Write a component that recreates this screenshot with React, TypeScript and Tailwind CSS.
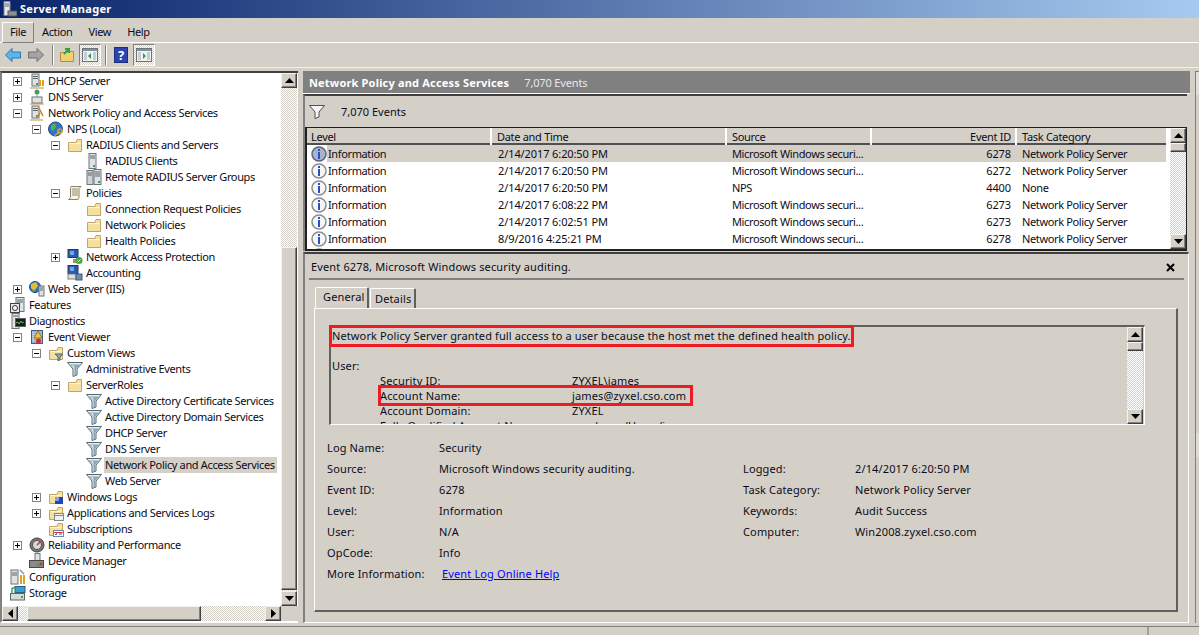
import React from 'react';

type IconKind =
    | 'dhcp' | 'dns' | 'npas' | 'globe' | 'folder' | 'client' | 'clients' | 'scroll' | 'nap' | 'acct'
    | 'web' | 'features' | 'diag' | 'viewer' | 'folderFilter' | 'filter' | 'winLogs' | 'appLogs'
    | 'subs' | 'gauge' | 'device' | 'config' | 'storage';

interface TreeNode {
    label: string;
    depth: 0 | 1 | 2 | 3 | 4;
    toggle?: '+' | '-';
    icon: IconKind;
    selected?: boolean;
}

const TREE: TreeNode[] = [
    { label: 'DHCP Server', depth: 1, toggle: '+', icon: 'dhcp' },
    { label: 'DNS Server', depth: 1, toggle: '+', icon: 'dns' },
    { label: 'Network Policy and Access Services', depth: 1, toggle: '-', icon: 'npas' },
    { label: 'NPS (Local)', depth: 2, toggle: '-', icon: 'globe' },
    { label: 'RADIUS Clients and Servers', depth: 3, toggle: '-', icon: 'folder' },
    { label: 'RADIUS Clients', depth: 4, icon: 'client' },
    { label: 'Remote RADIUS Server Groups', depth: 4, icon: 'clients' },
    { label: 'Policies', depth: 3, toggle: '-', icon: 'scroll' },
    { label: 'Connection Request Policies', depth: 4, icon: 'folder' },
    { label: 'Network Policies', depth: 4, icon: 'folder' },
    { label: 'Health Policies', depth: 4, icon: 'folder' },
    { label: 'Network Access Protection', depth: 3, toggle: '+', icon: 'nap' },
    { label: 'Accounting', depth: 3, icon: 'acct' },
    { label: 'Web Server (IIS)', depth: 1, toggle: '+', icon: 'web' },
    { label: 'Features', depth: 0, icon: 'features' },
    { label: 'Diagnostics', depth: 0, icon: 'diag' },
    { label: 'Event Viewer', depth: 1, toggle: '-', icon: 'viewer' },
    { label: 'Custom Views', depth: 2, toggle: '-', icon: 'folderFilter' },
    { label: 'Administrative Events', depth: 3, icon: 'filter' },
    { label: 'ServerRoles', depth: 3, toggle: '-', icon: 'folder' },
    { label: 'Active Directory Certificate Services', depth: 4, icon: 'filter' },
    { label: 'Active Directory Domain Services', depth: 4, icon: 'filter' },
    { label: 'DHCP Server', depth: 4, icon: 'filter' },
    { label: 'DNS Server', depth: 4, icon: 'filter' },
    { label: 'Network Policy and Access Services', depth: 4, icon: 'filter', selected: true },
    { label: 'Web Server', depth: 4, icon: 'filter' },
    { label: 'Windows Logs', depth: 2, toggle: '+', icon: 'winLogs' },
    { label: 'Applications and Services Logs', depth: 2, toggle: '+', icon: 'appLogs' },
    { label: 'Subscriptions', depth: 2, icon: 'subs' },
    { label: 'Reliability and Performance', depth: 1, toggle: '+', icon: 'gauge' },
    { label: 'Device Manager', depth: 1, icon: 'device' },
    { label: 'Configuration', depth: 0, icon: 'config' },
    { label: 'Storage', depth: 0, icon: 'storage' },
];

const INDENT = ['pl-[8px]', 'pl-[11px]', 'pl-[30px]', 'pl-[49px]', 'pl-[68px]'];

const EVENTS = [
    ['2/14/2017 6:20:50 PM', 'Microsoft Windows securi...', '6278', 'Network Policy Server'],
    ['2/14/2017 6:20:50 PM', 'Microsoft Windows securi...', '6272', 'Network Policy Server'],
    ['2/14/2017 6:20:50 PM', 'NPS', '4400', 'None'],
    ['2/14/2017 6:08:22 PM', 'Microsoft Windows securi...', '6273', 'Network Policy Server'],
    ['2/14/2017 6:02:51 PM', 'Microsoft Windows securi...', '6273', 'Network Policy Server'],
    ['8/9/2016 4:25:21 PM', 'Microsoft Windows securi...', '6278', 'Network Policy Server'],
    ['', '', '', ''],
];

const DETAILS_LEFT = [
    ['Log Name:', 'Security'],
    ['Source:', 'Microsoft Windows security auditing.'],
    ['Event ID:', '6278'],
    ['Level:', 'Information'],
    ['User:', 'N/A'],
    ['OpCode:', 'Info'],
];

const DETAILS_RIGHT = [
    ['Logged:', '2/14/2017 6:20:50 PM'],
    ['Task Category:', 'Network Policy Server'],
    ['Keywords:', 'Audit Success'],
    ['Computer:', 'Win2008.zyxel.cso.com'],
];

const RAISED = 'bg-[#d4d0c8] border border-t-[#f4f3ef] border-l-[#f4f3ef] border-r-[#404040] border-b-[#404040] shadow-[inset_-1px_-1px_0_#808080]';
const DITHER = 'bg-[repeating-conic-gradient(#d4d0c8_0_25%,#ffffff_0_50%)] bg-[length:2px_2px]';

const Folder = () => (
    <>
        <path d="M1.500 5.500h7.500l1-3h4.500v12h-13z" fill="#f6e0a0" stroke="#bfa46c" />
        <path d="M2 6.500h11.500" stroke="#fff4cc" />
    </>
);

const Funnel = () => (
    <>
        <path d="M0.500 1.500h15l-5.500 6.500v6l-4 1.500V8z" fill="#e4ecf0" stroke="#566870" />
        <path d="M3 3.500h10l-4 4.500v6H7.500V8z" fill="#8ea6b2" />
        <path d="M4.500 4.500h3l0 3z" fill="#dfe8ec" />
    </>
);

const Tower = ({ x = 3 }: { x?: number }) => (
    <>
        <rect x={x} y="1" width="7" height="12" fill="#dfe3e6" stroke="#6c7478" />
        <path d={`M${x + 1} 3.500h5M${x + 1} 5.500h5`} stroke="#59636a" />
        <rect x={x + 4} y="10" width="2" height="2" fill="#3fa63f" />
    </>
);

const TreeIcon = ({ kind }: { kind: IconKind }) => {
    let body: React.ReactNode = null;
    switch (kind) {
        case 'dhcp':
            body = <><Tower /><rect x="10" y="7" width="2" height="6" fill="#e0a020" /><rect x="13" y="7" width="2" height="6" fill="#e0a020" /><path d="M1 15h14" stroke="#c09030" /></>;
            break;
        case 'dns':
            body = <><circle cx="8" cy="3" r="2.500" fill="#3f9a78" /><path d="M8 5v3M1 15h14" stroke="#c09030" /><rect x="3" y="8" width="10" height="6" fill="#dfe3e6" stroke="#6c7478" /></>;
            break;
        case 'npas':
            body = <><Tower /><path d="M10 3l4 8M8 13l3-5" stroke="#c08a30" strokeWidth="1.500" /><path d="M1 15h13" stroke="#c09030" /></>;
            break;
        case 'globe':
            body = <><circle cx="7.500" cy="8" r="7" fill="#2f74c8" stroke="#234a84" /><path d="M3 4l4-2 1 4-3 4-2-2zM9 10l3-1 0 4-3 1z" fill="#55b050" /><circle cx="12" cy="10" r="2" fill="none" stroke="#d8a030" strokeWidth="1.500" /><path d="M10.500 11.500l-4 3" stroke="#d8a030" strokeWidth="1.500" /></>;
            break;
        case 'folder':
            body = <Folder />;
            break;
        case 'client':
            body = <><rect x="3" y="0.500" width="7" height="15" fill="#dfe3e6" stroke="#6c7478" /><path d="M4 3h5M4 5h5" stroke="#59636a" /><rect x="7" y="12" width="2" height="2" fill="#3fa63f" /></>;
            break;
        case 'clients':
            body = <><rect x="1" y="1.500" width="6" height="14" fill="#cfd4d8" stroke="#6c7478" /><rect x="8" y="0.500" width="7" height="15" fill="#dfe3e6" stroke="#6c7478" /><path d="M2 4h4M2 6h4M9 3h5M9 5h5M9 7h5" stroke="#59636a" /><rect x="12" y="12" width="2" height="2" fill="#3fa63f" /></>;
            break;
        case 'scroll':
            body = <><path d="M4 1.500h10l-2 2v9l-1 2H1.500l2-2v-10z" fill="#f8f4dc" stroke="#8a8468" /><path d="M5 4h6M5 6h6M5 8h6M5 10h6" stroke="#8a8a80" /></>;
            break;
        case 'nap':
            body = <><rect x="1" y="0.500" width="10" height="8" fill="#2858b8" stroke="#383838" /><rect x="3" y="2" width="4" height="4" fill="#70a8e8" /><rect x="6" y="10" width="3" height="4" fill="#c09030" /><circle cx="12" cy="11.500" r="3.500" fill="#40a848" /><path d="M10.500 11.500l1 1 2-2" stroke="#fff" fill="none" /></>;
            break;
        case 'acct':
            body = <><rect x="1" y="0.500" width="10" height="8" fill="#2858b8" stroke="#383838" /><rect x="3" y="2" width="4" height="4" fill="#70a8e8" /><rect x="1" y="9" width="8" height="5" fill="#dcdcdc" stroke="#808080" /><rect x="9" y="9" width="6" height="6" fill="#6c8cb8" stroke="#405878" /></>;
            break;
        case 'web':
            body = <><circle cx="6" cy="6" r="5.500" fill="#2f74c8" stroke="#234a84" /><path d="M2 3l5-2 2 4-4 5-3-3z" fill="#e0c030" /><path d="M3 8l3 2-2 1z" fill="#55b050" /><rect x="10" y="5" width="5" height="10" fill="#dfe3e6" stroke="#6c7478" /><path d="M11 7h3M11 9h3" stroke="#59636a" /></>;
            break;
        case 'features':
            body = <><rect x="6" y="0.500" width="8" height="14" fill="#dfe3e6" stroke="#6c7478" /><path d="M7 3h6M7 5h6" stroke="#59636a" /><rect x="0.500" y="6.500" width="9" height="9" fill="#e8e8e8" stroke="#404040" /><circle cx="5" cy="11" r="2.500" fill="#fff" stroke="#303030" /></>;
            break;
        case 'diag':
            body = <><rect x="2" y="0.500" width="7" height="15" fill="#dfe3e6" stroke="#6c7478" /><path d="M3 3h5" stroke="#59636a" /><rect x="5.500" y="5.500" width="10" height="8" fill="#1c1c1c" stroke="#606060" /><path d="M6 10l2-1 1 2 2-3 1 2 2-1" stroke="#58c050" fill="none" /></>;
            break;
        case 'viewer':
            body = <><rect x="2.500" y="1.500" width="11" height="13" fill="#9cb4dc" stroke="#4a5a88" /><path d="M4 3v10" stroke="#f0f0f0" strokeDasharray="1 1" /><path d="M9 2l4 7H5z" fill="#f0c828" stroke="#a87c10" /><circle cx="9.500" cy="12" r="2.500" fill="#d03030" /></>;
            break;
        case 'folderFilter':
            body = <><Folder /><path d="M7 9h8l-3 3v3l-2 1v-4z" fill="#8ca4b0" stroke="#566a74" /></>;
            break;
        case 'filter':
            body = <Funnel />;
            break;
        case 'winLogs':
            body = <><Folder /><rect x="7" y="8" width="8" height="7" fill="#1c48b8" /><rect x="7" y="8" width="4" height="4" fill="#7ca4e8" /></>;
            break;
        case 'appLogs':
            body = <><Folder /><rect x="6.500" y="8.500" width="9" height="7" fill="#f0f0f0" stroke="#808890" /><path d="M7 10.500h8" stroke="#808890" /></>;
            break;
        case 'subs':
            body = <><Folder /><rect x="5.500" y="9.500" width="10" height="6" fill="#ffffff" stroke="#7088a8" /><path d="M6 11.500h9" stroke="#d04040" /><path d="M7 13l1 1 1-2M11 13h3" stroke="#2858b8" fill="none" /></>;
            break;
        case 'gauge':
            body = <><circle cx="8" cy="8" r="7" fill="#787878" stroke="#404040" /><circle cx="8" cy="8" r="4.500" fill="#d8d8d8" stroke="#505050" /><path d="M8 8l3-3" stroke="#d03030" strokeWidth="1.500" /><path d="M10 2l3 2" stroke="#d84040" strokeWidth="1.500" /></>;
            break;
        case 'device':
            body = <><rect x="6" y="0.500" width="5" height="8" fill="#dfe3e6" stroke="#6c7478" /><rect x="0.500" y="7.500" width="14" height="7" fill="#8a8a8a" stroke="#484848" /><circle cx="12" cy="11" r="1.500" fill="#d03030" /><circle cx="9" cy="12" r="1.500" fill="#40a040" /></>;
            break;
        case 'config':
            body = <><rect x="1" y="1" width="7" height="14" fill="#dfe3e6" stroke="#6c7478" /><path d="M2 4h5M2 6h5" stroke="#59636a" /><rect x="10" y="6" width="2" height="9" fill="#e0a020" /><rect x="13" y="6" width="2" height="9" fill="#e0a020" /><path d="M10 1l4 4" stroke="#909090" strokeWidth="1.500" /></>;
            break;
        case 'storage':
            body = <><rect x="0.500" y="8.500" width="14" height="6.500" fill="#d8dcd8" stroke="#606860" /><rect x="11" y="11" width="2" height="2" fill="#40a040" /><rect x="5" y="1.500" width="10" height="6" fill="#38a0d0" stroke="#286080" /><path d="M2 3l3 0M2 3v5" stroke="#40a060" strokeWidth="1.500" /></>;
            break;
    }
    return <svg width="16" height="16" viewBox="0 0 16 16" className="shrink-0">{body}</svg>;
};

const Toggle = ({ sign }: { sign: '+' | '-' }) => (
    <span className="relative block w-[9px] h-[9px] border border-[#848484] bg-white">
        <span className="absolute left-[1px] top-[3px] w-[5px] h-[1px] bg-black" />
        {sign === '+' && <span className="absolute left-[3px] top-[1px] w-[1px] h-[5px] bg-black" />}
    </span>
);

const Arrow = ({ dir }: { dir: 'up' | 'down' | 'left' | 'right' }) => {
    const points = { up: '0,5 9,5 4.500,0', down: '0,0 9,0 4.500,5', left: '5,0 5,9 0,4.500', right: '0,0 0,9 5,4.500' }[dir];
    const box = dir === 'up' || dir === 'down' ? { width: 9, height: 5 } : { width: 5, height: 9 };
    return <svg {...box} viewBox={`0 0 ${box.width} ${box.height}`}><polygon points={points} fill="#000" /></svg>;
};

const ScrollButton = ({ dir, className = '' }: { dir: 'up' | 'down' | 'left' | 'right'; className?: string }) => (
    <div className={`${RAISED} flex items-center justify-center shrink-0 ${className}`}>
        <Arrow dir={dir} />
    </div>
);

const VScroll = ({ before, thumb }: { before: string; thumb: string }) => (
    <div className="w-[16px] shrink-0 flex flex-col">
        <ScrollButton dir="up" className="h-[15px]" />
        <div className={`${before} ${DITHER}`} />
        <div className={`${thumb} ${RAISED}`} />
        <div className={`flex-1 ${DITHER}`} />
        <ScrollButton dir="down" className="h-[15px]" />
    </div>
);

const InfoIcon = ({ dark }: { dark?: boolean }) => (
    <svg width="16" height="16" viewBox="0 0 16 16" className="shrink-0">
        <circle cx="8" cy="8" r="7" fill={dark ? '#a8b4cc' : '#f4f6fa'} stroke={dark ? '#5c6480' : '#8c8c90'} strokeWidth="1.500" />
        <rect x="7" y="3" width="2" height="2" fill="#2a50c0" />
        <rect x="7" y="6" width="2" height="7" fill="#2a50c0" />
    </svg>
);

const PaneToggle = ({ side }: { side: 'left' | 'right' }) => (
    <div className={`w-[22px] h-[22px] flex items-center justify-center border border-t-[#808080] border-l-[#808080] border-r-white border-b-white ${DITHER}`}>
        <svg width="16" height="14" viewBox="0 0 16 14">
            <rect x="0.500" y="0.500" width="15" height="13" fill="#f2f2f2" stroke="#6c7478" />
            <rect x="1" y="1" width="14" height="2" fill="#7a90a8" />
            <rect x="2" y="4" width="3" height="8" fill="#c4ccd4" />
            <rect x="11" y="4" width="3" height="8" fill="#c4ccd4" />
            <polygon points={side === 'left' ? '9,5 9,11 6,8' : '7,5 7,11 10,8'} fill="#2f9a50" />
        </svg>
    </div>
);

const ToolSep = () => <div className="w-[2px] h-[20px] bg-[#808080] border-r border-white" />;

const MenuBar = () => (
    <div className="h-[25px] shrink-0 flex items-center pl-[2px] pt-[4px] border-b border-white tracking-[-0.35px]">
        <div className="h-[21px] w-[32px] flex items-center justify-center border border-t-white border-l-white border-r-[#808080] border-b-[#808080]">File</div>
        <span className="ml-[8px]">Action</span>
        <span className="ml-[16px]">View</span>
        <span className="ml-[16px]">Help</span>
    </div>
);

const ToolBar = () => (
    <div className="h-[25px] shrink-0 flex items-center pl-[5px] border-b border-[#f0efe8]">
        <svg width="16" height="14" viewBox="0 0 16 14"><path d="M0.500 7L7 0.500v3.500h8.500v6H7v3.500z" fill="#5cb4ec" stroke="#2678b8" /></svg>
        <svg width="16" height="14" viewBox="0 0 16 14" className="ml-[7px]"><path d="M15.500 7L9 0.500v3.500H0.500v6H9v3.500z" fill="#a4a4a4" stroke="#707070" /></svg>
        <div className="ml-[8px]"><ToolSep /></div>
        <svg width="14" height="16" viewBox="0 0 14 16" className="ml-[6px]">
            <path d="M0.500 5.500h4l1-1h8v10h-13z" fill="#f0d070" stroke="#b09040" />
            <path d="M4 7l4-4M5 2h4v4" stroke="#38a038" strokeWidth="2" fill="none" />
        </svg>
        <div className="ml-[5px]"><PaneToggle side="left" /></div>
        <div className="ml-[4px]"><ToolSep /></div>
        <div className="ml-[7px] w-[14px] h-[16px] bg-[#2c44b0] border border-[#1c2c80] text-white font-bold text-[13px] leading-[15px] text-center">?</div>
        <div className="ml-[5px]"><PaneToggle side="right" /></div>
    </div>
);

const TreeRow = ({ node }: { node: TreeNode }) => (
    <div className={`h-[16px] flex items-center whitespace-nowrap tracking-[-0.35px] ${INDENT[node.depth]}`}>
        {node.depth > 0 && (
            <span className="w-[16px] shrink-0">{node.toggle && <Toggle sign={node.toggle} />}</span>
        )}
        <TreeIcon kind={node.icon} />
        <span className={`ml-[2px] pl-[1px] pr-[2px] h-[16px] leading-[16px] ${node.selected ? 'bg-[#d4d0c8]' : ''}`}>{node.label}</span>
    </div>
);

const TreePane = () => (
    <div className="w-[298px] shrink-0 flex flex-col border-t-2 border-l-2 border-b-2 border-t-[#404040] border-l-[#808080] border-b-white bg-white">
        <div className="flex-1 flex min-h-0">
            <div className="flex-1 min-w-0 overflow-hidden">
                {TREE.map((node, i) => <TreeRow key={i} node={node} />)}
            </div>
            <div className="flex pr-[1px]"><VScroll before="h-[159px]" thumb="h-[343px]" /></div>
        </div>
        <div className="h-[15px] flex shrink-0">
            <ScrollButton dir="left" className="w-[16px]" />
            <div className={`w-[9px] ${DITHER}`} />
            <div className={`w-[174px] ${RAISED}`} />
            <div className={`flex-1 ${DITHER}`} />
            <ScrollButton dir="right" className="w-[16px]" />
            <div className="w-[17px] bg-[#d4d0c8]" />
        </div>
    </div>
);

const EventList = () => (
    <div className="h-[157px] shrink-0 mr-[3px] flex flex-col border-t-2 border-l-2 border-t-[#404040] border-l-[#808080]">
        <div className="h-[31px] shrink-0 flex items-center pl-[4px] pt-[1px]">
            <svg width="16" height="14" viewBox="0 0 16 14"><path d="M0.500 0.500h15L10 7v5l-4 1.500V7z" fill="#f4f4f4" stroke="#505050" /></svg>
            <span className="ml-[16px] whitespace-nowrap">7,070 Events</span>
        </div>
        <div className="flex-1 min-h-0 flex border-t border-l-2 border-b-2 border-r border-[#202020] bg-white">
            <div className="flex-1 min-w-0 flex flex-col pr-[4px]">
                <div className="h-[17px] shrink-0 grid grid-cols-[185px_235px_145px_145px_1fr] bg-[#d4d0c8] border-b-2 border-[#505050] leading-[18px] whitespace-nowrap tracking-[-0.3px]">
                    <div className="pl-[4px] border-r-2 border-r-white">Level</div>
                    <div className="pl-[5px] border-r-2 border-r-white">Date and Time</div>
                    <div className="pl-[5px] border-r-2 border-r-white">Source</div>
                    <div className="pr-[4px] text-right border-r-2 border-r-white">Event ID</div>
                    <div className="pl-[5px]">Task Category</div>
                </div>
                <div className="flex-1 min-h-0 overflow-hidden">
                    {EVENTS.map((ev, i) => (
                        <div key={i} className={`h-[17px] grid grid-cols-[185px_235px_145px_145px_1fr] leading-[17px] whitespace-nowrap tracking-[-0.37px] ${i === 0 ? 'bg-[linear-gradient(90deg,#ffffff_20px,#d4d0c8_20px)]' : ''}`}>
                            <div className="flex items-center pl-[4px]">
                                <InfoIcon dark={i === 0} />
                                <span className="ml-[1px]">{ev[0] ? 'Information' : ''}</span>
                            </div>
                            <div className="pl-[6px] tracking-[-0.1px]">{ev[0]}</div>
                            <div className="pl-[5px]">{ev[1]}</div>
                            <div className="pr-[6px] text-right tracking-[-0.1px]">{ev[2]}</div>
                            <div className="pl-[5px]">{ev[3]}</div>
                        </div>
                    ))}
                </div>
            </div>
            <VScroll before="h-0" thumb="h-[9px]" />
        </div>
    </div>
);

const MessageBox = () => (
    <div className="relative mt-[16px] ml-[14px] mr-[31px] h-[100px] shrink-0 flex border-t-2 border-l-2 border-t-[#606060] border-l-[#606060] border-b border-r border-b-white border-r-white">
        <div className="flex-1 min-w-0 overflow-hidden pl-[1px] pt-[1px] leading-[15px] whitespace-nowrap">
            <div className="tracking-[0.11px]">Network Policy Server granted full access to a user because the host met the defined health policy.</div>
            <div className="h-[15px]" />
            <div>User:</div>
            <div className="ml-[48px] grid grid-cols-[192px_1fr]">
                <span>Security ID:</span><span>ZYXEL\james</span>
                <span>Account Name:</span><span>james@zyxel.cso.com</span>
                <span>Account Domain:</span><span>ZYXEL</span>
                <span>Fully Qualified Account Name:</span><span>zyxel.com/Users/james</span>
            </div>
        </div>
        <div className="flex mr-[1px]"><VScroll before="h-0" thumb="h-[9px]" /></div>
        <div className="absolute left-[-2px] top-[-2px] w-[525px] h-[22px] border-[3px] border-[#ed1c24]" />
        <div className="absolute left-[47px] top-[58px] w-[315px] h-[21px] border-[3px] border-[#ed1c24]" />
    </div>
);

const DetailRow = ({ label, value }: { label: string; value: string }) => (
    <div className="h-[21px] grid grid-cols-[112px_1fr] leading-[21px] whitespace-nowrap">
        <span>{label}</span>
        <span>{value}</span>
    </div>
);

const EventDetail = () => (
    <div className="flex-1 min-h-0 mt-[1px] mr-[1px] flex flex-col border-t-2 border-l-2 border-t-[#404040] border-l-[#808080] border-b border-r border-b-white border-r-white tracking-[0.14px]">
        <div className="h-[26px] shrink-0 mx-[4px] flex items-center justify-between border-b-2 border-[#808080] pl-[2px] pr-[9px] pt-[3px]">
            <span>Event 6278, Microsoft Windows security auditing.</span>
            <svg width="9" height="9" viewBox="0 0 9 9"><path d="M1 1l7 7M8 1l-7 7" stroke="#000" strokeWidth="2" /></svg>
        </div>
        <div className="flex h-[21px] pl-[10px] mt-[7px] shrink-0 items-end">
            <div className="h-[21px] w-[54px] pl-[7px] leading-[17px] border-t border-l border-white border-r-2 border-r-[#606060] rounded-t-[2px]">General</div>
            <div className="h-[20px] w-[46px] ml-[1px] pl-[4px] leading-[19px] border-t border-l border-white border-r-2 border-r-[#606060] rounded-t-[2px]">Details</div>
        </div>
        <div className="flex-1 min-h-0 ml-[9px] mr-[10px] mb-[10px] flex flex-col border-t border-l border-white border-r-2 border-b-2 border-r-[#606060] border-b-[#606060]">
            <MessageBox />
            <div className="mt-[12px] ml-[12px] flex">
                <div className="w-[416px] shrink-0">
                    {DETAILS_LEFT.map(([label, value]) => <DetailRow key={label} label={label} value={value} />)}
                    <div className="h-[21px] grid grid-cols-[115px_1fr] leading-[21px] whitespace-nowrap">
                        <span>More Information:</span>
                        <a className="text-[#0000ff] underline">Event Log Online Help</a>
                    </div>
                </div>
                <div className="flex-1 pt-[21px]">
                    {DETAILS_RIGHT.map(([label, value]) => <DetailRow key={label} label={label} value={value} />)}
                </div>
            </div>
        </div>
    </div>
);

export default function App() {
    return (
        <div className="w-[1199px] h-[635px] overflow-hidden flex flex-col bg-[#d4d0c8] text-[#0c0c18] text-[11px] font-['Noto_Sans',sans-serif]">
            <div className="h-[18px] shrink-0 flex items-center pl-[3px] bg-[linear-gradient(90deg,#0a246a,#a6caf0)]">
                <svg width="14" height="16" viewBox="0 0 14 16"><rect x="1" y="0.500" width="6" height="14" fill="#e4e8ec" stroke="#7c8488" /><path d="M2 3h4M2 5h4" stroke="#59636a" /><rect x="5" y="10" width="9" height="5" fill="#8c9094" stroke="#505458" /></svg>
                <span className="ml-[3px] text-white font-bold tracking-[0.3px]">Server Manager</span>
            </div>
            <MenuBar />
            <ToolBar />
            <div className="flex-1 min-h-0 mt-[3px] mb-[3px] flex">
                <TreePane />
                <div className="w-[5px] shrink-0" />
                <div className="w-[887px] shrink-0 flex flex-col">
                    <div className="h-[23px] shrink-0 pt-[2px] bg-[#808080] text-white flex items-center pl-[6px] border-b border-white whitespace-nowrap">
                        <span className="font-bold tracking-[0.18px]">Network Policy and Access Services</span>
                        <span className="ml-[15px] text-[#e8e8e8] tracking-[-0.15px]">7,070 Events</span>
                    </div>
                    <EventList />
                    <EventDetail />
                </div>
                <div className="flex-1 ml-[5px] border-l border-t border-[#808080]">
                    <div className="h-[23px] bg-[#e0ded8]" />
                    <div className="h-[24px] mt-[338px] bg-[#dedcd6]" />
                </div>
            </div>
            <div className="h-[9px] shrink-0 border-t border-[#808080] flex justify-end">
                <div className="w-[52px] border-l-2 border-[#a0a0a0]" />
            </div>
        </div>
    );
}
